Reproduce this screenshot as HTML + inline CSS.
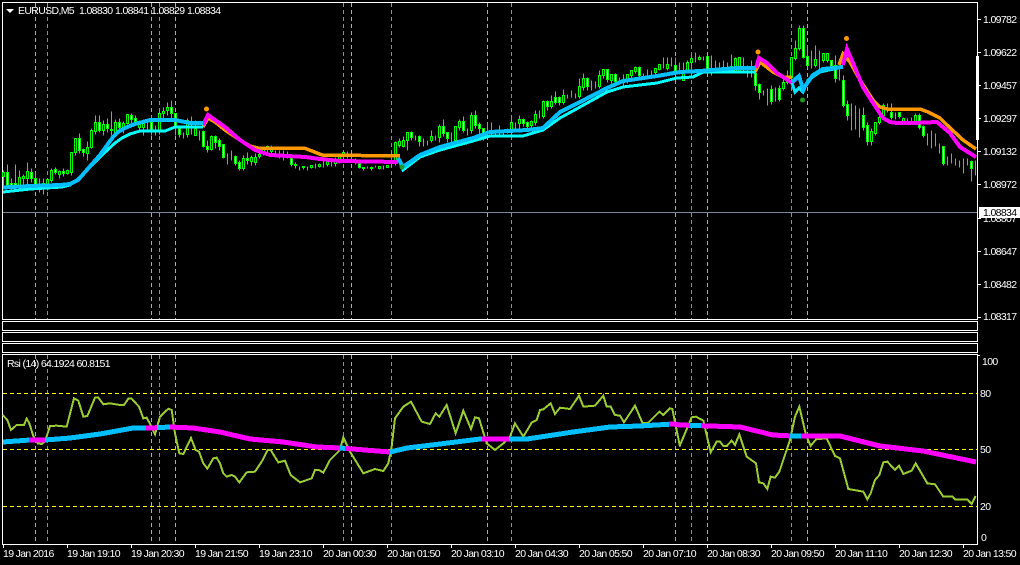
<!DOCTYPE html>
<html><head><meta charset="utf-8"><title>EURUSD,M5</title>
<style>
html,body{margin:0;padding:0;background:#000;width:1020px;height:565px;overflow:hidden}
svg{display:block}
text{font-family:"Liberation Sans",sans-serif;font-size:10.5px;letter-spacing:-.65px;fill:#fff}
.l{fill:none;stroke-linejoin:miter;shape-rendering:crispEdges}
.s{shape-rendering:crispEdges}
</style></head><body>
<svg width="1020" height="565" viewBox="0 0 1020 565" xmlns="http://www.w3.org/2000/svg">
<defs>
<clipPath id="mg"><path d="M29 420h16v50H29zM146 420h11v50h-11zM170 420h170v50H170zM345 420h45v50h-45zM482 420h27v50h-27zM669 410h21v50h-21zM701 410h89v50h-89zM801 410h176v70H801z"/></clipPath>
</defs>
<g class="s" fill="none" stroke="#fff">
<path d="M2.5 2.5H977.5V319.5H2.5zM2.5 321.5H977.5V330.5H2.5zM2.5 332.5H977.5V341.5H2.5zM2.5 343.5H977.5V352.5H2.5zM2.5 354.5H977.5V544.5H2.5z"/>
<path d="M978 19.5h3M978 52.5h3M978 85.5h3M978 118.5h3M978 151.5h3M978 184.5h3M978 218.5h3M978 251.5h3M978 284.5h3M978 317.5h3M978 355.5h2M3.5 545v3M67.5 545v3M131.5 545v3M195.5 545v3M259.5 545v3M323.5 545v3M387.5 545v3M451.5 545v3M515.5 545v3M579.5 545v3M643.5 545v3M707.5 545v3M771.5 545v3M835.5 545v3M899.5 545v3M963.5 545v3"/>
</g>
<rect x="976" y="56" width="3" height="84" fill="#fff"/>
<!-- verticals -->
<g class="s" fill="none" stroke-dasharray="4 3">
<path stroke="#ffa500" d="M35.5 3V319M151.5 3V319M175.5 3V319M351.5 3V319M487.5 3V319M675.5 3V319M707.5 3V319M807.5 3V319M35.5 355V544M151.5 355V544M175.5 355V544M351.5 355V544M487.5 355V544M675.5 355V544M707.5 355V544M807.5 355V544"/>
<path stroke="#32cd32" d="M47.5 3V319M159.5 3V319M343.5 3V319M391.5 3V319M511.5 3V319M691.5 3V319M791.5 3V319M47.5 355V544M159.5 355V544M343.5 355V544M391.5 355V544M511.5 355V544M691.5 355V544M791.5 355V544"/>
<path stroke="#ffff00" d="M3 393.5H977M3 449.5H977M3 506.5H977"/>
</g>
<path class="s" stroke="#778899" d="M3 212.5H977"/>
<!-- candles -->
<g transform="translate(.5 .5)" class="s" stroke="#0f0">
<path fill="none" d="M3 170V185M7 164V188M11 178V192M15 164V190M19 170V190M23 174V186M27 162V186M31 168V182M35 172V188M39 178V192M43 178V194M47 178V190M51 168V182M55 167V174M59 170V178M63 168V176M67 169V174M71 152V175M75 138V155M79 133V153M83 148V156M87 141V160M91 128V148M95 115V134M99 115V132M103 120V135M107 118V132M111 111V135M115 119V135M119 118V130M123 121V133M127 114V124M131 113V125M135 115V125M139 120V130M143 120V135M147 122V132M151 115V135M155 125V135M159 110V134M163 107V118M167 102V115M171 100V118M175 113V135M179 125V137M183 132V138M187 118V137M191 116V134M195 120V135M199 130V140M203 130V147M207 140V152M211 135V150M215 135V148M219 138V150M223 144V158M227 153V164M231 150V160M235 155V165M239 160V170M243 155V170M247 152V164M251 155V165M255 153V165M259 150V158M263 147V155M267 145V152M271 145V155M275 150V157M279 150V158M283 150V160M287 151V158M291 158V166M295 162V168M299 166V170M303 166V169M307 166V170M311 165V168M315 163V168M319 163V167M323 161V167M327 160V166M331 159V166M335 157V166M339 155V163M343 150V158M347 151V158M351 156V161M355 158V164M359 163V168M363 167V170M367 166V168M371 166V170M375 165V167M379 166V169M383 165V169M387 165V167M391 163V167M395 141V165M399 138V147M403 136V147M407 132V150M411 131V140M415 135V140M419 135V146M423 138V146M427 140V145M431 130V142M435 135V140M439 124V142M443 119V136M447 132V142M451 132V142M455 126V145M459 119V130M463 116V132M467 128V135M471 112V133M475 110V128M479 122V135M483 128V140M487 122V135M491 122V136M495 130V136M499 125V135M503 130V134M507 128V133M511 115V135M515 122V130M519 115V128M523 118V126M527 121V128M531 120V128M535 110V125M539 110V118M543 100V118M547 100V110M551 95V108M555 91V104M559 96V105M563 89V104M567 94V98M571 90V97M575 93V98M579 78V98M583 73V90M587 77V90M591 80V90M595 81V88M599 70V88M603 69V78M607 69V82M611 74V83M615 73V84M619 77V84M623 74V85M627 74V83M631 70V78M635 66V73M639 66V77M643 73V78M647 69V76M651 70V77M655 68V74M659 64V70M663 57V68M667 57V70M671 57V66M675 57V72M679 62V74M683 62V80M687 60V72M691 54V66M695 52V62M699 55V60M703 56V60M707 56V70M711 55V75M715 60V72M719 62V72M723 60V72M727 62V72M731 54V72M735 57V72M739 57V72M743 57V72M747 65V77M751 60V77M755 70V90M759 83V99M763 90V95M767 88V105M771 85V104M775 87V101M779 85V101M783 75V90M787 70V84M791 57V81M795 40V60M799 25V50M803 25V58M807 45V67M811 50V68M815 45V67M819 50V70M823 53V62M827 53V62M831 60V69M835 55V82M839 68V80M843 75V107M847 100V120M851 103V130M855 105V129M859 108V137M863 107V130M867 122V145M871 128V145M875 122V135M879 115V124M883 103V117M887 103V112M891 103V119M895 112V119M899 112V118M903 117V124M907 118V124M911 117V124M915 113V124M919 113V129M923 125V137M927 133V145M931 130V148M935 133V146M939 143V153M943 146V165M947 156V165M951 153V163M955 158V165M959 160V167M963 158V173M967 158V165M971 160V181M975 160V175"/>
<path fill="#000" d="M2 172h2V176H2zM18 177h2V186H18zM22 176h2V178H22zM26 171h2V178H26zM38 184h2V187H38zM42 183h2V188H42zM46 179h2V185H46zM50 170h2V180H50zM58 171h2V174H58zM66 170h2V173H66zM70 152h2V172H70zM74 138h2V152H74zM86 147h2V153H86zM90 130h2V147H90zM94 122h2V131H94zM102 124h2V130H102zM110 129h2V130H110zM114 122h2V132H114zM122 123h2V127H122zM126 114h2V123H126zM138 122h2V127H138zM142 123h2V127H142zM158 113h2V130H158zM162 111h2V113H162zM166 107h2V110H166zM186 120h2V134H186zM194 128h2V135H194zM210 136h2V149H210zM242 158h2V168H242zM250 157h2V161H250zM254 157h2V162H254zM258 154h2V156H258zM262 148h2V152H262zM266 146h2V149H266zM270 147h2V151H270zM294 164h2V165H294zM302 166h2V167H302zM310 165h2V167H310zM318 164h2V166H318zM326 161h2V164H326zM334 159h2V163H334zM338 155h2V160H338zM342 152h2V156H342zM362 167h2V168H362zM370 167h2V168H370zM378 166h2V168H378zM386 165h2V167H386zM394 142h2V160H394zM398 141h2V145H398zM402 140h2V146H402zM406 132h2V140H406zM430 136h2V140H430zM438 126h2V137H438zM454 126h2V140H454zM458 121h2V127H458zM470 115h2V130H470zM510 122h2V130H510zM518 119h2V123H518zM530 121h2V125H530zM534 114h2V122H534zM542 101h2V116H542zM550 101h2V106H550zM562 95h2V102H562zM578 86h2V96H578zM582 78h2V87H582zM598 75h2V86H598zM602 69h2V75H602zM610 74h2V80H610zM626 74h2V80H626zM630 70h2V75H630zM634 67h2V71H634zM654 68h2V72H654zM658 64h2V69H658zM666 64h2V68H666zM682 70h2V80H682zM686 62h2V70H686zM690 58h2V62H690zM698 57h2V59H698zM730 66h2V72H730zM734 58h2V71H734zM738 57h2V71H738zM782 82h2V88H782zM786 77h2V82H786zM790 57h2V77H790zM794 48h2V58H794zM798 28h2V48H798zM814 59h2V65H814zM822 53h2V60H822zM826 53h2V60H826zM870 131h2V141H870zM874 122h2V133H874zM878 117h2V122H878zM882 105h2V115H882zM902 118h2V122H902zM914 115h2V122H914z"/>
<path fill="#fff" d="M6 172h2V185H6zM10 183h2V185H10zM14 183h2V186H14zM30 172h2V178H30zM34 178h2V184H34zM54 169h2V172H54zM62 171h2V173H62zM78 138h2V150H78zM82 149h2V152H82zM98 122h2V130H98zM106 124h2V128H106zM118 122h2V127H118zM130 115h2V119H130zM134 118h2V121H134zM150 122h2V130H150zM174 113h2V127H174zM170 107h2V113H170zM178 128h2V134H178zM202 131h2V146H202zM206 146h2V149H206zM214 136h2V142H214zM218 140h2V146H218zM222 144h2V157H222zM234 156h2V163H234zM238 162h2V168H238zM246 158h2V160H246zM290 158h2V164H290zM358 163h2V167H358zM410 132h2V137H410zM418 136h2V141H418zM442 126h2V133H442zM446 132h2V138H446zM462 121h2V130H462zM474 115h2V125H474zM478 124h2V128H478zM482 128h2V133H482zM522 119h2V123H522zM526 122h2V126H526zM546 101h2V106H546zM554 97h2V102H554zM558 97h2V102H558zM586 78h2V86H586zM606 69h2V79H606zM614 74h2V81H614zM638 67h2V75H638zM674 65h2V70H674zM706 56h2V69H706zM754 73h2V85H754zM758 84h2V92H758zM770 89h2V101H770zM778 88h2V99H778zM802 28h2V57H802zM806 56h2V65H806zM830 60h2V67H830zM834 65h2V78H834zM842 80h2V105H842zM846 104h2V115H846zM862 115h2V127H862zM866 125h2V141H866zM890 112h2V117H890zM898 112h2V116H898zM918 115h2V127H918zM922 126h2V135H922zM942 146h2V163H942zM970 161h2V168H970z"/>
</g>
<!-- main lines -->
<polyline class="l" stroke="#ff9900" stroke-width="3.5" points="203,127 208,118 215,122 225,130 240,140 250,146 258,148 304,148 312,151 322,155 400,156"/>
<polyline class="l" stroke="#ff00ff" stroke-width="4" points="203,125 208,115 225,127 240,140 255,150 270,155 305,157 320,159 340,161 398,162"/>
<polyline class="l" stroke="#ff9900" stroke-width="3.5" points="755,72 760,62 773,72 783,77 792,77"/>
<polyline class="l" stroke="#ff00ff" stroke-width="4" points="756,68 759,58 767,63 777,73 792,83 799,76"/>
<polyline class="l" stroke="#ff9900" stroke-width="3.5" points="839,65 843,54 850,62 860,80 873,100 880,107 887,109 920,109 928,112 940,118 947,125 963,140 976,149"/>
<polyline class="l" stroke="#ff00ff" stroke-width="4" points="843,65 847,49 853,63 863,87 873,103 883,118 890,122 897,123 913,123 937,122 950,133 960,147 976,157"/>
<polyline class="l" stroke="#00ffff" stroke-width="3" points="3,192 30,189 62,187 70,185 78,179 85,172 100,157 115,143 122,138 130,134 140,131 165,131 175,127 203,127"/>
<polyline class="l" stroke="#00bfff" stroke-width="4" points="3,187.5 30,186 60,185 70,184 78,180 85,172 100,155 113,137 118,132 125,128 135,124 150,120 175,120 190,123 203,123"/>
<polyline class="l" stroke="#00ffff" stroke-width="3" points="399,160 403,170 420,157 440,150 473,141 490,136 523,136 543,130 560,118 580,107 607,92 623,87 657,83 677,78 693,77 703,72 756,72"/>
<polyline class="l" stroke="#00bfff" stroke-width="4" points="398,158 403,167 420,155 440,147 473,138 490,132 527,130 543,128 560,112 580,102 607,88 623,81 657,76 680,72 700,71 737,68 756,68"/>
<polyline class="l" stroke="#00e5ff" stroke-width="3" points="792,83 795,92 799,88 803,92 808,80 820,72 843,67"/>
<polyline class="l" stroke="#00bfff" stroke-width="4" points="792,82 799,76 803,89 813,75 823,69 843,67"/>
<circle cx="206.5" cy="109" r="2.5" fill="#ff9900"/><circle cx="758" cy="52" r="2.5" fill="#ff9900"/><circle cx="846.5" cy="38.5" r="2.5" fill="#ff9900"/>
<circle cx="802.5" cy="100" r="2.5" fill="#229922"/><circle cx="402" cy="167" r="2.5" fill="#229922"/>
<!-- RSI -->
<g fill="none" class="s" stroke="#9acd32" stroke-width="2">
<polyline vector-effect="non-scaling-stroke" transform="translate(0 310) scale(.33333)" points="8,315 22,330 33,360 50,345 72,345 80,326 88,340 100,378 113,400 125,402 135,395 150,348 170,347 200,350 222,265 235,272 250,320 262,318 285,263 295,263 310,283 330,280 360,285 372,285 385,266 395,266 417,290 430,325 440,323 452,345 465,373 480,320 505,296 515,300 525,370 538,430 550,432 573,384 587,420 597,425 610,460 622,476 640,445 650,443 660,460 670,490 680,500 695,495 705,500 718,517 740,487 765,485 785,455 803,420 812,420 835,457 855,452 872,495 900,517 935,505 945,480 957,480 970,488 990,450 1020,420"/>
<polyline vector-effect="non-scaling-stroke" transform="translate(340 350) scale(.33333)" points="0,298 10,262 30,305 70,370 105,357 130,363 145,340 155,290 165,205 190,170 213,155 245,215 270,222 287,190 298,200 320,165 347,250 370,182 393,237 405,202 417,205 440,280 465,300 490,280 510,260 525,220 550,260 575,218 590,210 600,180 610,178 632,160 645,192 660,173 690,177 717,137 730,170 765,167 790,137 800,170 812,170 825,195 840,197 852,217 885,167 908,220 925,218 958,185 970,195 990,175 997,177 1020,290"/>
<polyline vector-effect="non-scaling-stroke" transform="translate(680 310) scale(.33333)" points="0,405 15,370 35,322 48,320 70,332 92,427 110,395 120,395 130,408 140,408 155,392 165,405 178,373 200,440 228,460 237,517 250,520 262,537 272,500 285,503 298,485 330,390 345,320 358,290 378,375 392,408 408,388 440,385 465,438 480,445 505,537 550,545 562,568 572,550 585,510 598,495 610,457 622,455 645,480 657,467 670,492 695,482 707,460 742,520 765,523 790,560 818,560 825,568 862,568 875,582 887,558"/>
</g>
<polyline class="l" stroke="#00bfff" stroke-width="5" points="3,442 30,440 45,440 70,438 100,434 133,428 150,428 170,427 193,428 220,432 250,439 283,442 317,447 340,448 390,452 407,448 440,444 480,439 527,439 573,432 610,427 640,426 673,424 680,425 740,427 773,435 793,436 840,436 880,446 923,451 976,462"/>
<polyline class="l" clip-path="url(#mg)" stroke="#ff00ff" stroke-width="5" points="3,442 30,440 45,440 70,438 100,434 133,428 150,428 170,427 193,428 220,432 250,439 283,442 317,447 340,448 390,452 407,448 440,444 480,439 527,439 573,432 610,427 640,426 673,424 680,425 740,427 773,435 793,436 840,436 880,446 923,451 976,462"/>
<!-- labels -->
<path d="M6 9h8l-4 4z" fill="#fff"/>
<text x="18" y="14">EURUSD,M5</text><text x="79" y="14">1.08830</text><text x="115" y="14">1.08841</text><text x="151" y="14">1.08829</text><text x="187" y="14">1.08834</text>
<text x="7" y="367">Rsi (14) 64.1924 60.8151</text>
<text x="983" y="23">1.09782</text><text x="983" y="56">1.09622</text><text x="983" y="89">1.09457</text><text x="983" y="122">1.09297</text><text x="983" y="155">1.09132</text><text x="983" y="188">1.08972</text><text x="983" y="222">1.08807</text><text x="983" y="255">1.08647</text><text x="983" y="288">1.08482</text><text x="983" y="320">1.08317</text>
<rect x="979" y="207" width="41" height="11" fill="#fff"/>
<text x="983" y="216" style="fill:#000">1.08834</text>
<text x="982" y="365">100</text><text x="980" y="397">80</text><text x="980" y="453">50</text><text x="980" y="510">20</text><text x="981" y="541">0</text>
<text x="3" y="557">19 Jan 2016</text><text x="67" y="557">19 Jan 19:10</text><text x="131" y="557">19 Jan 20:30</text><text x="195" y="557">19 Jan 21:50</text><text x="259" y="557">19 Jan 23:10</text><text x="323" y="557">20 Jan 00:30</text><text x="387" y="557">20 Jan 01:50</text><text x="451" y="557">20 Jan 03:10</text><text x="515" y="557">20 Jan 04:30</text><text x="579" y="557">20 Jan 05:50</text><text x="643" y="557">20 Jan 07:10</text><text x="707" y="557">20 Jan 08:30</text><text x="771" y="557">20 Jan 09:50</text><text x="835" y="557">20 Jan 11:10</text><text x="899" y="557">20 Jan 12:30</text><text x="963" y="557">20 Jan 13:50</text>
</svg>
</body></html>
